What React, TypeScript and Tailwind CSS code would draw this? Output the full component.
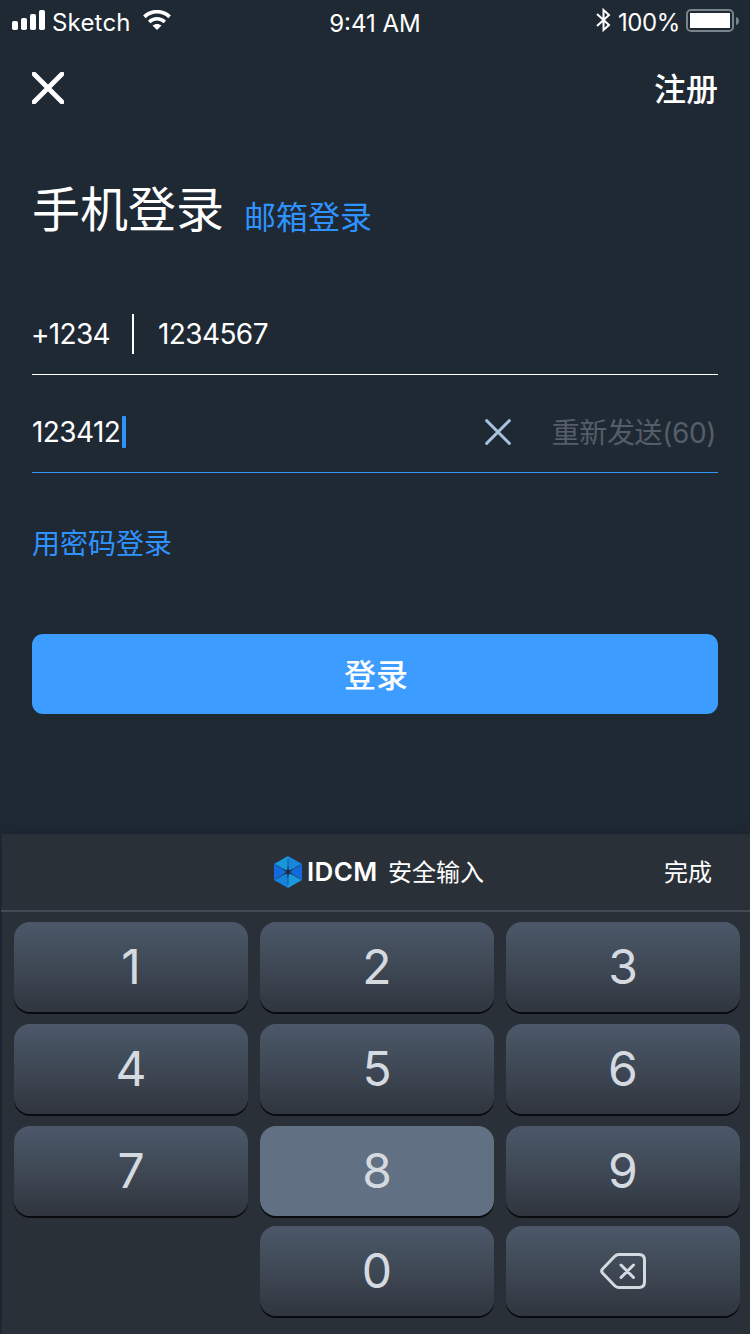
import React from "react";

const latin = "font-['Inter','Noto_Sans_CJK_SC',sans-serif]";
const cjk = "font-['Noto_Sans_CJK_SC',sans-serif]";

function StatusBar() {
  return (
    <header className={`flex h-10 items-start justify-between text-white ${latin}`}>
      <div className="flex w-[250px] pl-3">
        <svg className="mt-[10px] h-5 w-[34px]" viewBox="0 0 34 20" fill="currentColor">
          <rect x="0" y="11" width="6" height="9" rx="1.8" />
          <rect x="9" y="8" width="6" height="12" rx="1.8" />
          <rect x="18" y="4" width="6" height="16" rx="1.8" />
          <rect x="27" y="0" width="6" height="20" rx="1.8" />
        </svg>
        <span className="ml-[6px] mt-[7px] w-[91px] text-[24px] leading-8 tracking-[0.2px]">Sketch</span>
        <svg className="mt-[10px] h-5 w-7" viewBox="0 0 28 20" fill="none" stroke="currentColor">
          <path d="M1.4 6.8C8.6 0 19.4 0 26.6 6.8" strokeWidth="3.8" />
          <path d="M6.2 12C10.7 7.7 17.3 7.7 21.8 12" strokeWidth="3.6" />
          <path d="M14 20L9.5 15.5C12 13.4 16 13.4 18.5 15.5Z" fill="currentColor" stroke="none" />
        </svg>
      </div>
      <span className="mt-[8px] text-[24px] leading-8">9:41 AM</span>
      <div className="flex w-[250px] justify-end pr-[11px]">
        <svg className="mt-2 h-6 w-4" viewBox="0 0 16 24" fill="none" stroke="currentColor" strokeWidth="2">
          <path d="M1 6L13 17L7.5 22V2L13 7L1 18" />
        </svg>
        <span className="ml-[6px] mt-[7px] w-[68px] whitespace-nowrap text-[24px] leading-8 tracking-[-0.4px]">100%</span>
        <svg className="mt-[9px] h-[23px] w-[53px]" viewBox="0 0 53 23">
          <rect x="1" y="1" width="46" height="21" rx="4" fill="none" stroke="#79838a" strokeWidth="2" />
          <rect x="4" y="4" width="40" height="15" fill="#fff" />
          <path d="M50 8C54 9 54 15 50 16Z" fill="#79838a" />
        </svg>
      </div>
    </header>
  );
}

function Cross({ className, width }: { className: string; width: number }) {
  return (
    <svg className={className} viewBox="0 0 32 32" fill="none" stroke="currentColor" strokeWidth={width} strokeLinecap="round">
      <path d="M2 2L30 30M30 2L2 30" />
    </svg>
  );
}

function Logo() {
  return (
    <svg className="h-8 w-7" viewBox="0 0 28 32">
      <path d="M14 0L28 8L14 16Z" fill="#1786dc" />
      <path d="M14 0L0 8L14 16Z" fill="#1896dc" />
      <path d="M0 8V24L14 16Z" fill="#126bdd" />
      <path d="M28 8V24L14 16Z" fill="#126bdd" />
      <path d="M0 24L14 32V16Z" fill="#1683da" />
      <path d="M28 24L14 32V16Z" fill="#1899e1" />
      <path d="M14 3V29M2 9.1L26 22.9M26 9.1L2 22.9" stroke="#24405e" strokeWidth="0.7" />
      <path d="M14 10L14.9 14.4L19 13L15.8 16L19 19L14.9 17.6L14 22L13.1 17.6L9 19L12.2 16L9 13L13.1 14.4Z" fill="#202a36" />
    </svg>
  );
}

function Key({ label }: { label: string }) {
  const fill = label === "8" ? "bg-[#617083]" : "bg-linear-to-b from-[#4c586a] via-[#3e4854] to-[#30353e]";
  return (
    <button
      className={`flex h-[90px] items-center justify-center rounded-[16px] text-[48px] leading-none text-[#d5dae0] shadow-[0_2px_0_#090b0d] ${fill} ${latin}`}
    >
      {label === "delete" ? (
        <svg className="mr-px h-9 w-[46px]" viewBox="0 0 46 36" fill="none" stroke="currentColor" strokeLinecap="round" strokeLinejoin="round">
          <path d="M18.5 1.5H39Q44.5 1.5 44.5 7V29Q44.5 34.5 39 34.5H18.5Q16.5 34.5 14.5 32.5L2.5 20Q.8 18 2.5 16L14.5 3.5Q16.5 1.5 18.5 1.5Z" strokeWidth="3" />
          <path d="M21 12L33.5 24.5M33.5 12L21 24.5" strokeWidth="3" />
        </svg>
      ) : (
        <span>{label}</span>
      )}
    </button>
  );
}

function Keyboard() {
  return (
    <section className="ml-[2px] h-[500px] bg-[#2a3037] shadow-[0_-2px_10px_#1b2430]">
      <div className={`flex h-[76px] text-white ${cjk}`}>
        <div className="ml-[272px] mt-[22px]">
          <Logo />
        </div>
        <span className="ml-[5px] mt-[22px] w-[81px] font-['Inter',sans-serif] text-[26px] font-semibold leading-8 tracking-[0.4px]">IDCM</span>
        <span className="mt-[21px] text-[24px] leading-8">安全输入</span>
        <button className="ml-auto mr-[38px] mt-[21px] h-8 text-[24px] leading-8">完成</button>
      </div>
      <div className="-ml-px h-[2px] bg-[#434a54]" />
      <div className="grid grid-cols-3 gap-x-3 pl-3 pr-[10px] pt-[10px]">
        {["1", "2", "3", "4", "5", "6", "7", "8", "9"].map((n) => (
          <div className="h-[102px] [&>button]:w-full" key={n}>
            <Key label={n} />
          </div>
        ))}
      </div>
      <div className="-mt-[2px] grid grid-cols-3 gap-x-3 pl-3 pr-[10px]">
        <div />
        <Key label="0" />
        <Key label="delete" />
      </div>
    </section>
  );
}

export default function App() {
  return (
    <main className={`flex h-[1334px] w-[750px] flex-col overflow-hidden bg-[#1f2934] text-white ${cjk}`}>
      <StatusBar />
      <div className="flex h-[96px] items-center justify-between px-8">
        <Cross className="size-8" width={4.8} />
        <button className="pb-[2px] text-[32px] font-medium leading-none">注册</button>
      </div>
      <div className="flex h-[158px] items-start px-8 pt-[34px]">
        <h1 className="w-[212px] whitespace-nowrap text-[48px] leading-[72px]">手机登录</h1>
        <span className="mt-[21px] text-[32px] leading-[48px] text-[#2e93ff]">邮箱登录</span>
      </div>
      <div className={`mx-8 flex h-[81px] border-b border-white text-[28px] ${latin}`}>
        <span className="-ml-px mt-[20px] w-[101px] leading-10 tracking-[-0.7px]">+1234</span>
        <span className="mt-[20px] h-10 w-[2px] bg-white" />
        <span className="ml-[24px] mt-[20px] leading-10 tracking-[-0.6px]">1234567</span>
      </div>
      <div className={`mx-8 flex h-[98px] border-b border-[#3495f7] text-[28px] ${latin}`}>
        <span className="mt-[37px] w-[90px] whitespace-nowrap leading-10 tracking-[-0.6px]">123412</span>
        <span className="mt-[41px] h-8 w-1 rounded-[1px] bg-[#2e93ff]" />
        <Cross className="ml-[359px] mt-[44px] h-[26px] w-[26px] text-[#a9c2e0]" width={3.5} />
        <span className="ml-auto mr-[2px] mt-[38px] leading-10 tracking-[-0.4px] text-[#555e68]">重新发送(60)</span>
      </div>
      <button className="ml-8 mt-[49px] h-10 self-start text-[28px] leading-10 text-[#2e93ff]">用密码登录</button>
      <button className="mx-8 mt-[72px] flex h-20 items-center justify-center rounded-[11px] bg-[#3c9cff] pb-[2px] pl-[2px] text-[32px] font-medium leading-none">登录</button>
      <div className="mt-[120px]">
        <Keyboard />
      </div>
    </main>
  );
}
